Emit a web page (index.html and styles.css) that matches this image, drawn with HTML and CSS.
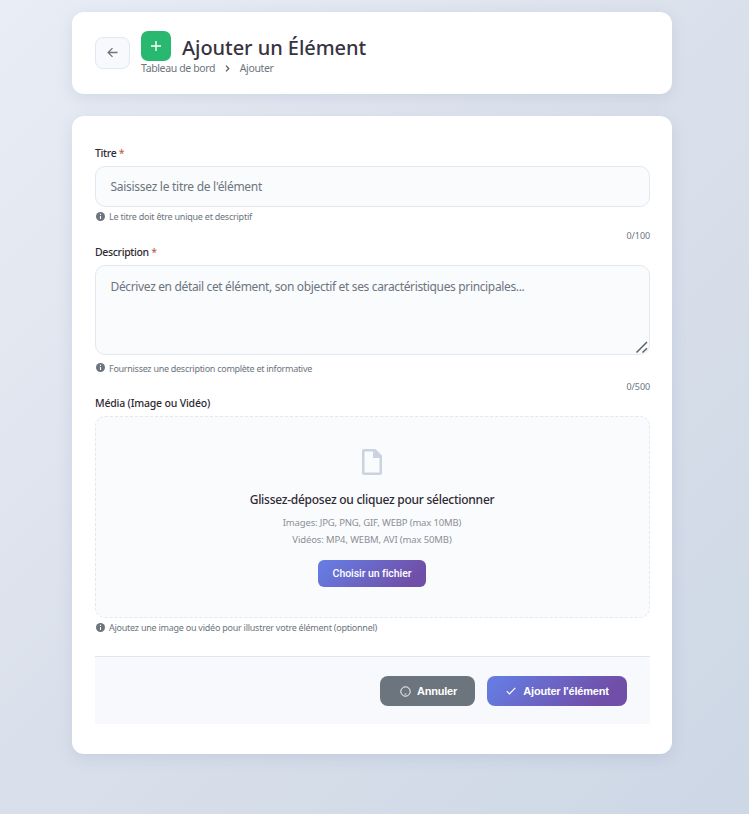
FILE: index.html
```html
<!DOCTYPE html>
<html lang="fr">
<head>
<meta charset="utf-8">
<title>Ajouter un Élément</title>
<link rel="stylesheet" href="styles.css">
</head>
<body>
<header class="card header">
  <a class="back" aria-label="Retour">
    <svg width="12" height="12" viewBox="0 0 12 12" fill="none" stroke="currentColor" stroke-width="1.4"><path d="M11.5 6H1.5M6 1.2 1.2 6 6 10.8"/></svg>
  </a>
  <div class="heading">
    <div class="title-row">
      <span class="badge"><svg width="10" height="10" viewBox="0 0 10 10" stroke="currentColor" stroke-width="1.4"><path d="M5 0v10M0 5h10"/></svg></span>
      <h1><span>Ajouter un Élément</span></h1>
    </div>
    <nav class="crumbs">
      <span class="crumb-home">Tableau de bord</span>
      <svg width="5" height="7" viewBox="0 0 5 7" fill="none" stroke="currentColor" stroke-width="1.2"><path d="M1 .6 3.8 3.5 1 6.4"/></svg>
      <span class="crumb-current">Ajouter</span>
    </nav>
  </div>
</header>
<main class="card form">
  <label class="label label-title">Titre <i>*</i></label>
  <div class="input"><span class="ph-title">Saisissez le titre de l'élément</span></div>
  <div class="help"><svg class="info" viewBox="0 0 9 9"><circle cx="4.5" cy="4.5" r="4.5" fill="#6c757d"/><path d="M4.5 1.8v1.2M4.5 3.9v3" stroke="#fff" stroke-width="1.1"/></svg><span class="help-title">Le titre doit être unique et descriptif</span></div>
  <div class="count">0/100</div>
  <label class="label label-desc">Description <i>*</i></label>
  <div class="input area"><span class="ph-desc">Décrivez en détail cet élément, son objectif et ses caractéristiques principales...</span>
    <svg class="grip" width="12" height="12" viewBox="0 0 12 12" stroke="#5c6166" stroke-width="1.5"><path d="M.5 11.5 11 1M6.5 11.5 11 7.2"/></svg>
  </div>
  <div class="help help-area"><svg class="info" viewBox="0 0 9 9"><circle cx="4.5" cy="4.5" r="4.5" fill="#6c757d"/><path d="M4.5 1.8v1.2M4.5 3.9v3" stroke="#fff" stroke-width="1.1"/></svg><span class="help-desc">Fournissez une description complète et informative</span></div>
  <div class="count">0/500</div>
  <label class="label label-media">Média (Image ou Vidéo)</label>
  <div class="drop">
    <svg class="file" width="20" height="26" viewBox="0 0 20 26"><path fill="#cbd2e0" fill-rule="evenodd" d="M2 0h11.5L20 6.5V24a2 2 0 0 1-2 2H2a2 2 0 0 1-2-2V2a2 2 0 0 1 2-2ZM2.500 2.500v21h15V9H11V2.500Z"/></svg>
    <p class="drop-title"><span>Glissez-déposez ou cliquez pour sélectionner</span></p>
    <p class="drop-line images"><span>Images: JPG, PNG, GIF, WEBP (max 10MB)</span></p>
    <p class="drop-line videos"><span>Vidéos: MP4, WEBM, AVI (max 50MB)</span></p>
    <button class="choose">Choisir un fichier</button>
  </div>
  <div class="help"><svg class="info" viewBox="0 0 9 9"><circle cx="4.5" cy="4.5" r="4.5" fill="#6c757d"/><path d="M4.5 1.8v1.2M4.5 3.9v3" stroke="#fff" stroke-width="1.1"/></svg><span class="help-media">Ajoutez une image ou vidéo pour illustrer votre élément (optionnel)</span></div>
  <footer class="actions">
    <button class="btn cancel"><svg width="11" height="11" viewBox="0 0 11 11" fill="none" stroke="currentColor"><circle cx="5.5" cy="5.5" r="4.7"/><path d="M4.5 8h2" stroke-width=".8"/></svg><span>Annuler</span></button>
    <button class="btn submit"><svg width="10" height="8" viewBox="0 0 10 8" fill="none" stroke="currentColor" stroke-width="1.2"><path d="M.8 4.2 3.4 6.8 9.3 .8"/></svg><span>Ajouter l'élément</span></button>
  </footer>
</main>
</body>
</html>
```
FILE: styles.css
```css
* { box-sizing: border-box; }
html { height: 100%; }
body {
  margin: 0;
  min-height: 814px;
  padding: 12px 77px 0 72px;
  font-family: "Noto Sans", "Open Sans", sans-serif;
  color: #2d2a33;
  background: linear-gradient(135deg, #e9edf5 0%, #dae0eb 50%, #cdd7e5 100%);
}
h1, p { margin: 0; }
.card {
  background: #fff;
  border-radius: 12px;
  box-shadow: 0 4px 16px rgba(80, 100, 150, .13);
}
.header { height: 82px; display: flex; padding: 19px 23px 0; }
.back {
  width: 35px; height: 32px; margin-top: 6px; padding-bottom: 1px;
  display: flex; align-items: center; justify-content: center;
  background: #f8f9fc; border: 1px solid #e2e8f0; border-radius: 8px;
  color: #6c757d;
}
.back svg { width: 11px; height: 11px; }
.heading { margin-left: 11px; }
.title-row { display: flex; gap: 11px; height: 30px; }
.badge {
  width: 30px; height: 30px; border-radius: 7px;
  display: flex; align-items: center; justify-content: center;
  background: #28b870; color: #fff;
}
h1 { font-size: 20px; line-height: 33px; font-weight: 550; white-space: nowrap; letter-spacing: -.05px; color: #383342; }
.crumbs { display: flex; align-items: center; height: 15px; font-size: 10.5px; line-height: 15px; letter-spacing: -.36px; color: #6c757d; white-space: nowrap; }
.crumbs svg { margin: 0 9.5px 0 10px; color: #555; }
.form { height: 638px; margin-top: 22px; padding: 29px 22px 0 23px; }
.label { display: block; height: 21px; font-size: 10.5px; line-height: 17px; font-weight: 500; white-space: nowrap; }
.label-title { letter-spacing: -.33px; }
.label-desc { letter-spacing: -.35px; }
.label-media { letter-spacing: -.19px; }
.label i { font-style: normal; font-weight: 400; color: #c0563a; }
.input {
  height: 41px; padding: 0 14.5px;
  background: #fafbfd; border: 1px solid #e2e8f0; border-radius: 10px;
  font-size: 12px; line-height: 40px; color: #6c757d; white-space: nowrap;
}
.ph-title { letter-spacing: -.28px; }
.ph-desc { letter-spacing: -.35px; }
.area { position: relative; height: 90px; line-height: 42px; }
.grip { position: absolute; right: 1px; bottom: 1px; }
.help { height: 20px; display: flex; align-items: center; gap: 4px; padding-left: 1px; font-size: 9px; line-height: 20px; color: #6c757d; white-space: nowrap; }
.help-title { letter-spacing: -.24px; }
.help-desc { letter-spacing: -.28px; }
.help-media { letter-spacing: -.245px; }
.info { width: 9px; height: 9px; margin-bottom: 1px; }
.help-area { margin-top: 3px; }
.help-area span { padding-top: 1px; }
.count { height: 17px; text-align: right; font-size: 9px; line-height: 17px; letter-spacing: -.1px; color: #6c757d; }
.drop {
  height: 202px; padding: 32px 1px 0 0;
  display: flex; flex-direction: column; align-items: center;
  background: #fafbfd; border: 1px dashed #e2e8f0; border-radius: 10px;
  white-space: nowrap;
}
.drop-title { margin-top: 15px; font-size: 12px; line-height: 20px; font-weight: 500; letter-spacing: -.26px; }
.drop-line { font-size: 9.5px; line-height: 17px; color: #8b8f96; }
.images { margin-top: 4px; letter-spacing: -.16px; }
.videos { letter-spacing: -.13px; }
.choose {
  width: 108px; height: 27px; margin-top: 12px; padding: 0;
  border: 0; border-radius: 6px; color: #fff;
  background: linear-gradient(135deg, #667adf 10%, #704fa8 85%);
  font: 500 10.5px Roboto, sans-serif;
  letter-spacing: -.05px;
}
.actions {
  height: 68px; margin-top: 18px; padding: 19px 23px 0;
  display: flex; justify-content: flex-end; gap: 12px;
  background: #f8f9fc; border-top: 1px solid #dfe6ef;
}
.btn {
  height: 30px; padding: 0; border: 0; border-radius: 8px;
  display: flex; align-items: center; justify-content: center; gap: 6px;
  color: #fff; white-space: nowrap;
  font: bold 11px "Liberation Sans", sans-serif;
  letter-spacing: -.2px;
}
.cancel { width: 95px; padding-left: 2px; background: #6c757d; }
.submit { width: 140px; gap: 7px; padding-left: 1px; background: linear-gradient(135deg, #667adf 10%, #704fa8 80%); }
```
